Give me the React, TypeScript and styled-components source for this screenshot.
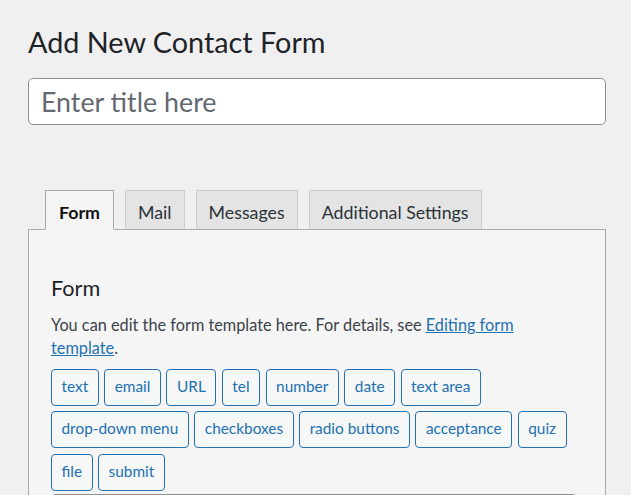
import React, { useState } from 'react';
import styled, { createGlobalStyle } from 'styled-components';

const GlobalStyle = createGlobalStyle`
  html, body {
    margin: 0;
    overflow: hidden;
  }
  body {
    background: #f0f0f1;
    font-family: Lato, "Noto Sans", sans-serif;
    color: #3c434a;
  }
`;

const tabs = ['Form', 'Mail', 'Messages', 'Additional Settings'];

const tags = [
  'text',
  'email',
  'URL',
  'tel',
  'number',
  'date',
  'text area',
  'drop-down menu',
  'checkboxes',
  'radio buttons',
  'acceptance',
  'quiz',
  'file',
  'submit',
];

const Wrap = styled.div`
  padding: 24px 25px 0 28px;
`;

const PageTitle = styled.h1`
  margin: 0;
  font-size: 28.8px;
  line-height: 36px;
  font-weight: 400;
  color: #1d2327;
`;

const TitleInput = styled.input`
  display: block;
  box-sizing: border-box;
  width: 100%;
  height: 47px;
  margin-top: 18px;
  padding: 0 12px;
  border: 1px solid #8c8f94;
  border-radius: 5px;
  background: #fff;
  font-family: inherit;
  font-size: 26.8px;
  color: #2c3338;
  outline: none;

  &::placeholder {
    color: #646970;
  }
`;

const TabList = styled.ul`
  display: flex;
  gap: 11px;
  list-style: none;
  margin: 65px 0 -1px;
  padding: 0 0 0 17px;
`;

const Tab = styled.li<{ $active: boolean }>`
  position: relative;
  z-index: 1;
  box-sizing: border-box;
  height: 40px;
  padding: 9px ${p => (p.$active ? 13 : 12)}px 5px;
  border: 1px solid ${p => (p.$active ? '#aaa' : '#ccc')};
  border-bottom-color: ${p => (p.$active ? '#f5f5f5' : '#aaa')};
  background: ${p => (p.$active ? '#f5f5f5' : '#e4e4e4')};
  font-size: 17.8px;
  line-height: 24px;
  font-weight: ${p => (p.$active ? 700 : 400)};
  color: ${p => (p.$active ? '#111' : '#2c3338')};
  cursor: pointer;
`;

const Panel = styled.div`
  background: #f5f5f5;
  border: 1px solid #aaa;
  padding: 32px 28px 40px 22px;
  min-height: 400px;
`;

const PanelTitle = styled.h2`
  margin: 12px 0 0;
  font-size: 21.6px;
  line-height: 28px;
  font-weight: 400;
  color: #1d2327;
`;

const Intro = styled.p`
  max-width: 505px;
  margin: 12px 0 0;
  font-size: 16.3px;
  line-height: 22.7px;
  color: #3c434a;

  a {
    color: #2271b1;
    text-decoration: underline;
  }
`;

const TagList = styled.div`
  display: flex;
  flex-wrap: wrap;
  gap: 5.5px;
  margin-top: 9.5px;
`;

const TagButton = styled.button`
  box-sizing: border-box;
  height: 37px;
  padding: 0 9.5px 2px;
  border: 1px solid #2271b1;
  border-radius: 4px;
  background: #f6f7f7;
  color: #2271b1;
  font-family: inherit;
  font-size: 15.4px;
  line-height: 33px;
  cursor: pointer;
`;

const FormBody = styled.textarea`
  display: block;
  box-sizing: border-box;
  width: 100%;
  height: 240px;
  margin-top: 3px;
  border: 1px solid #8c8f94;
  border-radius: 4px;
  background: #fff;
  resize: none;
`;

const App = () => {
  const [active, setActive] = useState('Form');

  return (
    <>
      <GlobalStyle />
      <Wrap>
        <PageTitle>Add New Contact Form</PageTitle>
        <TitleInput placeholder="Enter title here" />
        <TabList>
          {tabs.map(t => (
            <Tab key={t} $active={t === active} onClick={() => setActive(t)}>
              {t}
            </Tab>
          ))}
        </TabList>
        <Panel>
          <PanelTitle>Form</PanelTitle>
          <Intro>
            You can edit the form template here. For details, see{' '}
            <a href="#">Editing form template</a>.
          </Intro>
          <TagList>
            {tags.map(t => (
              <TagButton key={t}>{t}</TagButton>
            ))}
          </TagList>
          <FormBody />
        </Panel>
      </Wrap>
    </>
  );
};

export default App;
